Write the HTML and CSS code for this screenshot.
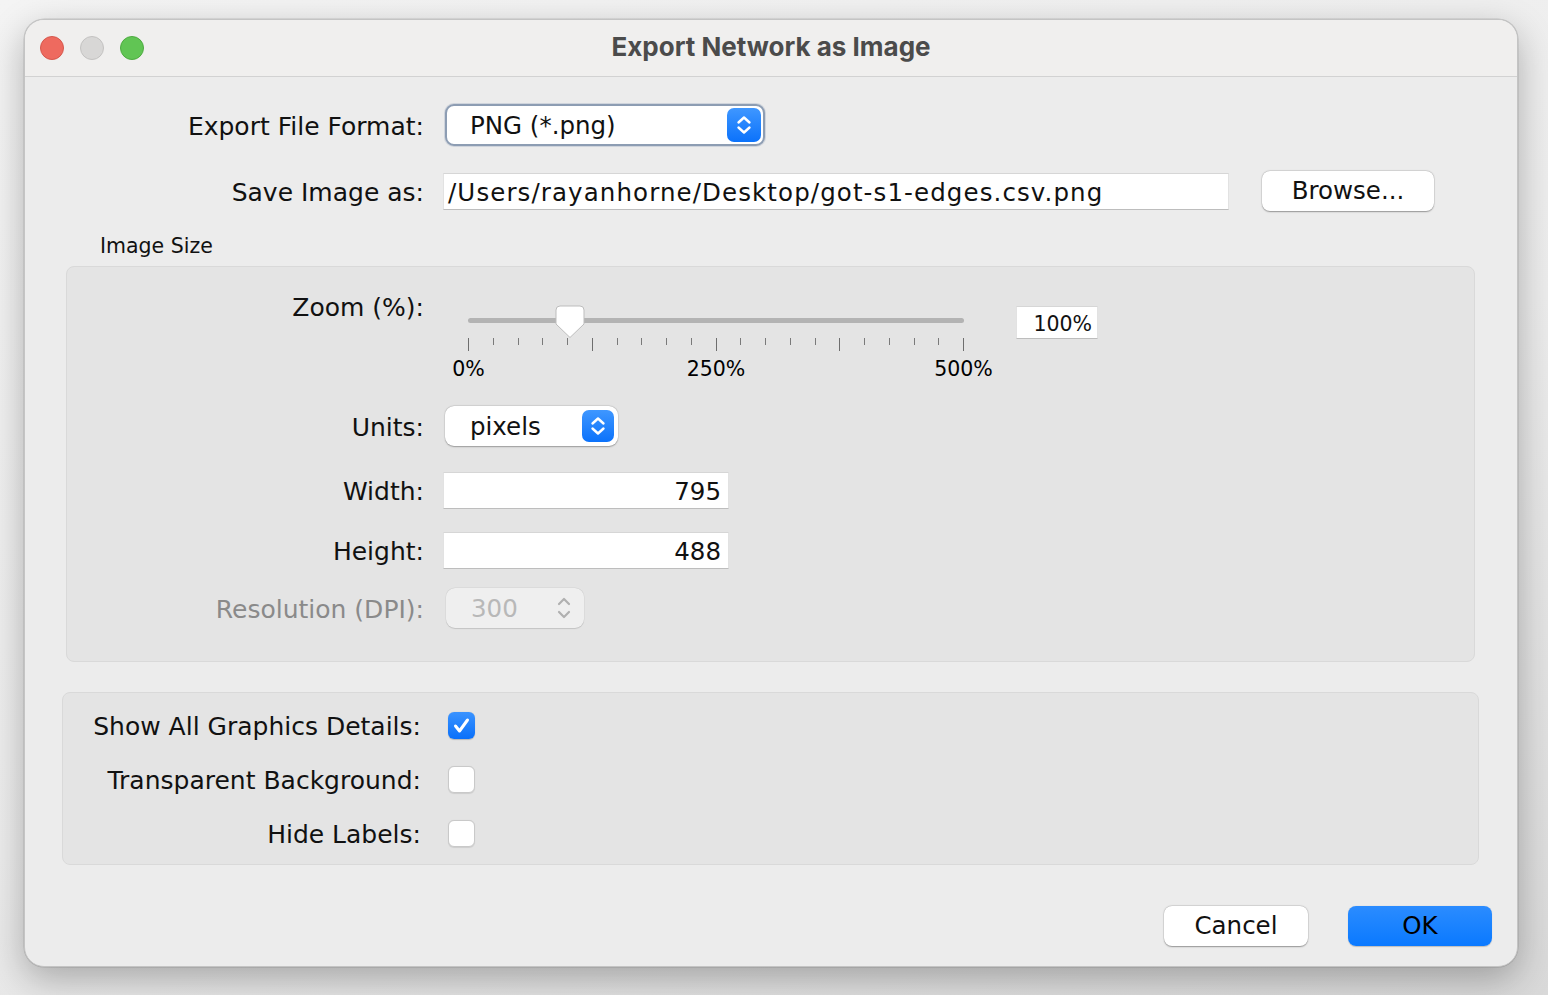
FILE: index.html
```html
<!DOCTYPE html>
<html>
<head>
<meta charset="utf-8">
<title>Export Network as Image</title>
<link rel="stylesheet" href="styles.css">
</head>
<body>
<div class="window">
  <div class="titlebar">
    <div class="lights">
      <span class="light red"></span>
      <span class="light gray"></span>
      <span class="light green"></span>
    </div>
    <div class="title">Export Network as Image</div>
    <div></div>
  </div>
  <div class="content">
    <div class="row row-format">
      <div class="lbl lbl-top">Export File Format:</div>
      <div class="combo combo-format">
        <span class="combo-text">PNG (*.png)</span>
        <span class="combo-btn">
          <svg width="34" height="34" viewBox="0 0 34 34"><path d="M11.5 14.5 L17 9.5 L22.5 14.5" fill="none" stroke="#fff" stroke-width="2.4" stroke-linecap="round" stroke-linejoin="round"/><path d="M11.5 19.5 L17 24.5 L22.5 19.5" fill="none" stroke="#fff" stroke-width="2.4" stroke-linecap="round" stroke-linejoin="round"/></svg>
        </span>
      </div>
    </div>
    <div class="row row-save">
      <div class="lbl lbl-top">Save Image as:</div>
      <div class="field field-path">/Users/rayanhorne/Desktop/got-s1-edges.csv.png</div>
      <button class="btn btn-browse">Browse...</button>
    </div>
    <div class="section-title">Image Size</div>
    <div class="panel panel-size">
      <div class="zoom-row">
        <div class="lbl lbl-panel lbl-zoom">Zoom (%):</div>
        <div class="slider">
          <div class="track-wrap"><div class="track"></div></div>
          <div class="ticks">
            <span class="tick major"></span><span class="tick"></span><span class="tick"></span><span class="tick"></span><span class="tick"></span>
            <span class="tick major"></span><span class="tick"></span><span class="tick"></span><span class="tick"></span><span class="tick"></span>
            <span class="tick major"></span><span class="tick"></span><span class="tick"></span><span class="tick"></span><span class="tick"></span>
            <span class="tick major"></span><span class="tick"></span><span class="tick"></span><span class="tick"></span><span class="tick"></span>
            <span class="tick major"></span>
          </div>
          <div class="tick-labels">
            <span class="tl"><span>0%</span></span>
            <span class="tl"><span>250%</span></span>
            <span class="tl"><span>500%</span></span>
          </div>
          <svg class="knob" width="30" height="34" viewBox="0 0 30 34"><path d="M5 1 H25 A4 4 0 0 1 29 5 V19 L15 32.5 L1 19 V5 A4 4 0 0 1 5 1 Z" fill="#fff" stroke="#bdbdbd" stroke-width="1"/></svg>
        </div>
        <div class="field field-zoom">100%</div>
      </div>
      <div class="row row-units">
        <div class="lbl lbl-panel">Units:</div>
        <div class="combo combo-units">
          <span class="combo-text">pixels</span>
          <span class="combo-btn small">
            <svg width="32" height="32" viewBox="0 0 32 32"><path d="M10.5 13.5 L16 8.5 L21.5 13.5" fill="none" stroke="#fff" stroke-width="2.4" stroke-linecap="round" stroke-linejoin="round"/><path d="M10.5 18.5 L16 23.5 L21.5 18.5" fill="none" stroke="#fff" stroke-width="2.4" stroke-linecap="round" stroke-linejoin="round"/></svg>
          </span>
        </div>
      </div>
      <div class="row row-width">
        <div class="lbl lbl-panel">Width:</div>
        <div class="field field-num">795</div>
      </div>
      <div class="row row-height">
        <div class="lbl lbl-panel">Height:</div>
        <div class="field field-num">488</div>
      </div>
      <div class="row row-res">
        <div class="lbl lbl-panel disabled">Resolution (DPI):</div>
        <div class="spinner">
          <span class="spin-text">300</span>
          <svg width="20" height="28" viewBox="0 0 20 28"><path d="M5 10 L10 5 L15 10" fill="none" stroke="#b0b0b0" stroke-width="2.2" stroke-linecap="round" stroke-linejoin="round"/><path d="M5 18 L10 23 L15 18" fill="none" stroke="#b0b0b0" stroke-width="2.2" stroke-linecap="round" stroke-linejoin="round"/></svg>
        </div>
      </div>
    </div>
    <div class="panel panel-opts">
      <div class="row row-check">
        <div class="lbl lbl-check">Show All Graphics Details:</div>
        <span class="check checked">
          <svg width="27" height="27" viewBox="0 0 27 27"><path d="M7.5 14 L11.5 19 L19.5 8" fill="none" stroke="#fff" stroke-width="3" stroke-linecap="round" stroke-linejoin="round"/></svg>
        </span>
      </div>
      <div class="row row-check">
        <div class="lbl lbl-check">Transparent Background:</div>
        <span class="check"></span>
      </div>
      <div class="row row-check">
        <div class="lbl lbl-check">Hide Labels:</div>
        <span class="check"></span>
      </div>
    </div>
    <div class="buttons">
      <button class="btn btn-action">Cancel</button>
      <button class="btn btn-action btn-ok">OK</button>
    </div>
  </div>
</div>
</body>
</html>
```

FILE: styles.css
```css
* { box-sizing: border-box; }

html, body {
  margin: 0;
  padding: 0;
}

body {
  width: 1548px;
  height: 995px;
  overflow: hidden;
  background: linear-gradient(160deg, #f4f4f4 0%, #ececec 55%, #d9d9d9 100%);
  font-family: "DejaVu Sans", sans-serif;
  color: #111;
  padding-top: 19px;
  padding-left: 24px;
}

.window {
  width: 1494px;
  height: 948px;
  border-radius: 20px;
  background: #ececec;
  border: 1px solid #c4c4c4;
  box-shadow: 0 12px 36px rgba(0, 0, 0, 0.28), 0 0 0 0.5px rgba(0, 0, 0, 0.15);
  overflow: hidden;
}

/* Title bar */
.titlebar {
  height: 57px;
  background: #f0efee;
  border-bottom: 1px solid #d2d2d2;
  display: grid;
  grid-template-columns: 1fr auto 1fr;
  align-items: center;
}

.lights {
  display: flex;
  gap: 16px;
  padding-left: 15px;
}

.light {
  width: 24px;
  height: 24px;
  border-radius: 50%;
  display: block;
}

.light.red { background: #ee6a5f; border: 1px solid #d5584d; }
.light.gray { background: #d8d7d6; border: 1px solid #c3c2c1; }
.light.green { background: #61c554; border: 1px solid #4eab41; }

.title {
  font-family: "Inter", sans-serif;
  font-weight: 700;
  font-size: 26px;
  line-height: 30px;
  color: #4b4b4b;
  padding-bottom: 2px;
}

/* Content */
.content {
  padding-top: 27px;
}

.row {
  display: flex;
  align-items: center;
}

.lbl {
  font-size: 25px;
  line-height: 30px;
  text-align: right;
  flex: none;
  white-space: nowrap;
  padding-top: 3px;
}

.lbl-top { width: 399px; }
.lbl-panel { width: 357px; }
.lbl-check { width: 358px; }

.lbl.disabled { color: #8a8a8a; }

.row-format { height: 42px; }

.combo {
  background: #fff;
  border-radius: 9px;
  display: flex;
  align-items: center;
  justify-content: space-between;
  font-size: 24.5px;
  flex: none;
}

.combo-text { padding-top: 1px; }

.combo-format {
  margin-left: 21px;
  width: 320px;
  height: 42px;
  border: 2px solid #8d9db3;
  padding: 0 2px 0 23px;
  box-shadow: 0 0 0 1px rgba(120, 140, 170, 0.25);
}

.combo-btn {
  width: 34px;
  height: 34px;
  border-radius: 7px;
  background: linear-gradient(#3f97ff, #0b72fb);
  display: flex;
  align-items: center;
  justify-content: center;
}

.combo-btn.small {
  width: 32px;
  height: 32px;
}

.combo-btn svg { display: block; }

.row-save {
  margin-top: 25px;
  height: 40px;
}

.field {
  background: #fff;
  border-top: 1px solid #d6d6d6;
  border-left: 1px solid #e2e2e2;
  border-right: 1px solid #e2e2e2;
  border-bottom: 1px solid #bdbdbd;
  font-size: 24.5px;
  display: flex;
  align-items: center;
  flex: none;
}

.field-path {
  margin-left: 19px;
  width: 786px;
  height: 37px;
  padding-left: 4px;
  padding-top: 2px;
  letter-spacing: 1.1px;
}

.btn {
  font-family: "DejaVu Sans", sans-serif;
  font-size: 24.5px;
  color: #111;
  background: #fff;
  border: none;
  border-radius: 8px;
  box-shadow: 0 0.5px 1.5px rgba(0, 0, 0, 0.35), 0 0 0 0.5px rgba(0, 0, 0, 0.08);
  padding: 0;
  flex: none;
}

.btn-browse {
  margin-left: 33px;
  width: 172px;
  height: 40px;
  padding-bottom: 2px;
}

.section-title {
  margin-top: 23px;
  margin-left: 75px;
  font-size: 20.5px;
  line-height: 24px;
  height: 24px;
}

/* Panels */
.panel {
  background: #e4e4e4;
  border: 1px solid #d9d9d9;
  border-radius: 8px;
}

.panel-size {
  margin-top: 8px;
  margin-left: 41px;
  width: 1409px;
  height: 396px;
}

.zoom-row {
  display: flex;
  align-items: flex-start;
  height: 119px;
}

.lbl-zoom {
  margin-top: 23px;
}

.slider {
  position: relative;
  margin-left: 20px;
  margin-top: 35px;
  width: 550px;
  height: 80px;
  flex: none;
}

.track-wrap {
  height: 36px;
  padding-top: 16px;
}

.track {
  margin-left: 24px;
  width: 496px;
  height: 5px;
  border-radius: 3px;
  background: #b3b3b3;
}

.ticks {
  margin-left: 24px;
  width: 496px;
  height: 14px;
  display: flex;
  justify-content: space-between;
  align-items: flex-start;
}

.tick {
  width: 1px;
  height: 7px;
  background: #7a7a7a;
}

.tick.major {
  height: 13px;
  background: #6e6e6e;
}

.tick-labels {
  margin-left: 24px;
  width: 496px;
  display: flex;
  justify-content: space-between;
  margin-top: 3px;
  font-size: 20.5px;
  line-height: 28px;
  color: #000;
}

.tl {
  width: 1px;
  display: flex;
  justify-content: center;
  white-space: nowrap;
}

.knob {
  position: absolute;
  left: 111px;
  top: 3px;
}

.field-zoom {
  margin-top: 39px;
  margin-left: 22px;
  width: 82px;
  height: 33px;
  font-size: 20.5px;
  justify-content: flex-end;
  padding-right: 5px;
  padding-top: 2px;
}

.row-units {
  margin-top: 20px;
  height: 40px;
}

.combo-units {
  margin-left: 21px;
  width: 173px;
  height: 40px;
  padding: 0 4px 0 25px;
  box-shadow: 0 0.5px 1.5px rgba(0, 0, 0, 0.3), 0 0 0 0.5px rgba(0, 0, 0, 0.06);
}

.row-width {
  margin-top: 26px;
  height: 36px;
}

.row-height {
  margin-top: 24px;
  height: 36px;
}

.field-num {
  margin-left: 19px;
  width: 286px;
  height: 37px;
  justify-content: flex-end;
  padding-right: 7px;
  padding-top: 2px;
}

.row-res {
  margin-top: 20px;
  height: 40px;
}

.spinner {
  margin-left: 22px;
  width: 138px;
  height: 40px;
  border-radius: 9px;
  background: #efefef;
  box-shadow: 0 0.5px 1px rgba(0, 0, 0, 0.12), 0 0 0 0.5px rgba(0, 0, 0, 0.05);
  display: flex;
  align-items: center;
  justify-content: space-between;
  padding: 0 10px 0 25px;
  font-size: 24.5px;
  color: #b8b8b8;
  flex: none;
}

.spin-text { padding-top: 1px; }

.spinner svg { display: block; }

.panel-opts {
  margin-top: 30px;
  margin-left: 37px;
  width: 1417px;
  height: 173px;
  padding-top: 5px;
}

.row-check {
  height: 54px;
}

.check {
  margin-left: 27px;
  width: 27px;
  height: 27px;
  border-radius: 6px;
  background: #fff;
  border: 1px solid #c9c9c9;
  box-shadow: 0 0.5px 1px rgba(0, 0, 0, 0.1);
  display: block;
  flex: none;
}

.check.checked {
  background: linear-gradient(#3a93ff, #0a70fa);
  border: none;
  box-shadow: 0 0.5px 1px rgba(0, 0, 0, 0.2);
}

.check svg { display: block; }

.buttons {
  margin-top: 41px;
  display: flex;
  justify-content: flex-end;
  gap: 40px;
  padding-right: 25px;
}

.btn-action {
  width: 144px;
  height: 40px;
  padding-bottom: 1px;
}

.btn-ok {
  background: linear-gradient(#2b8cff, #0a79ff);
  color: #000;
  box-shadow: 0 0.5px 1px rgba(0, 0, 0, 0.2);
}
```
